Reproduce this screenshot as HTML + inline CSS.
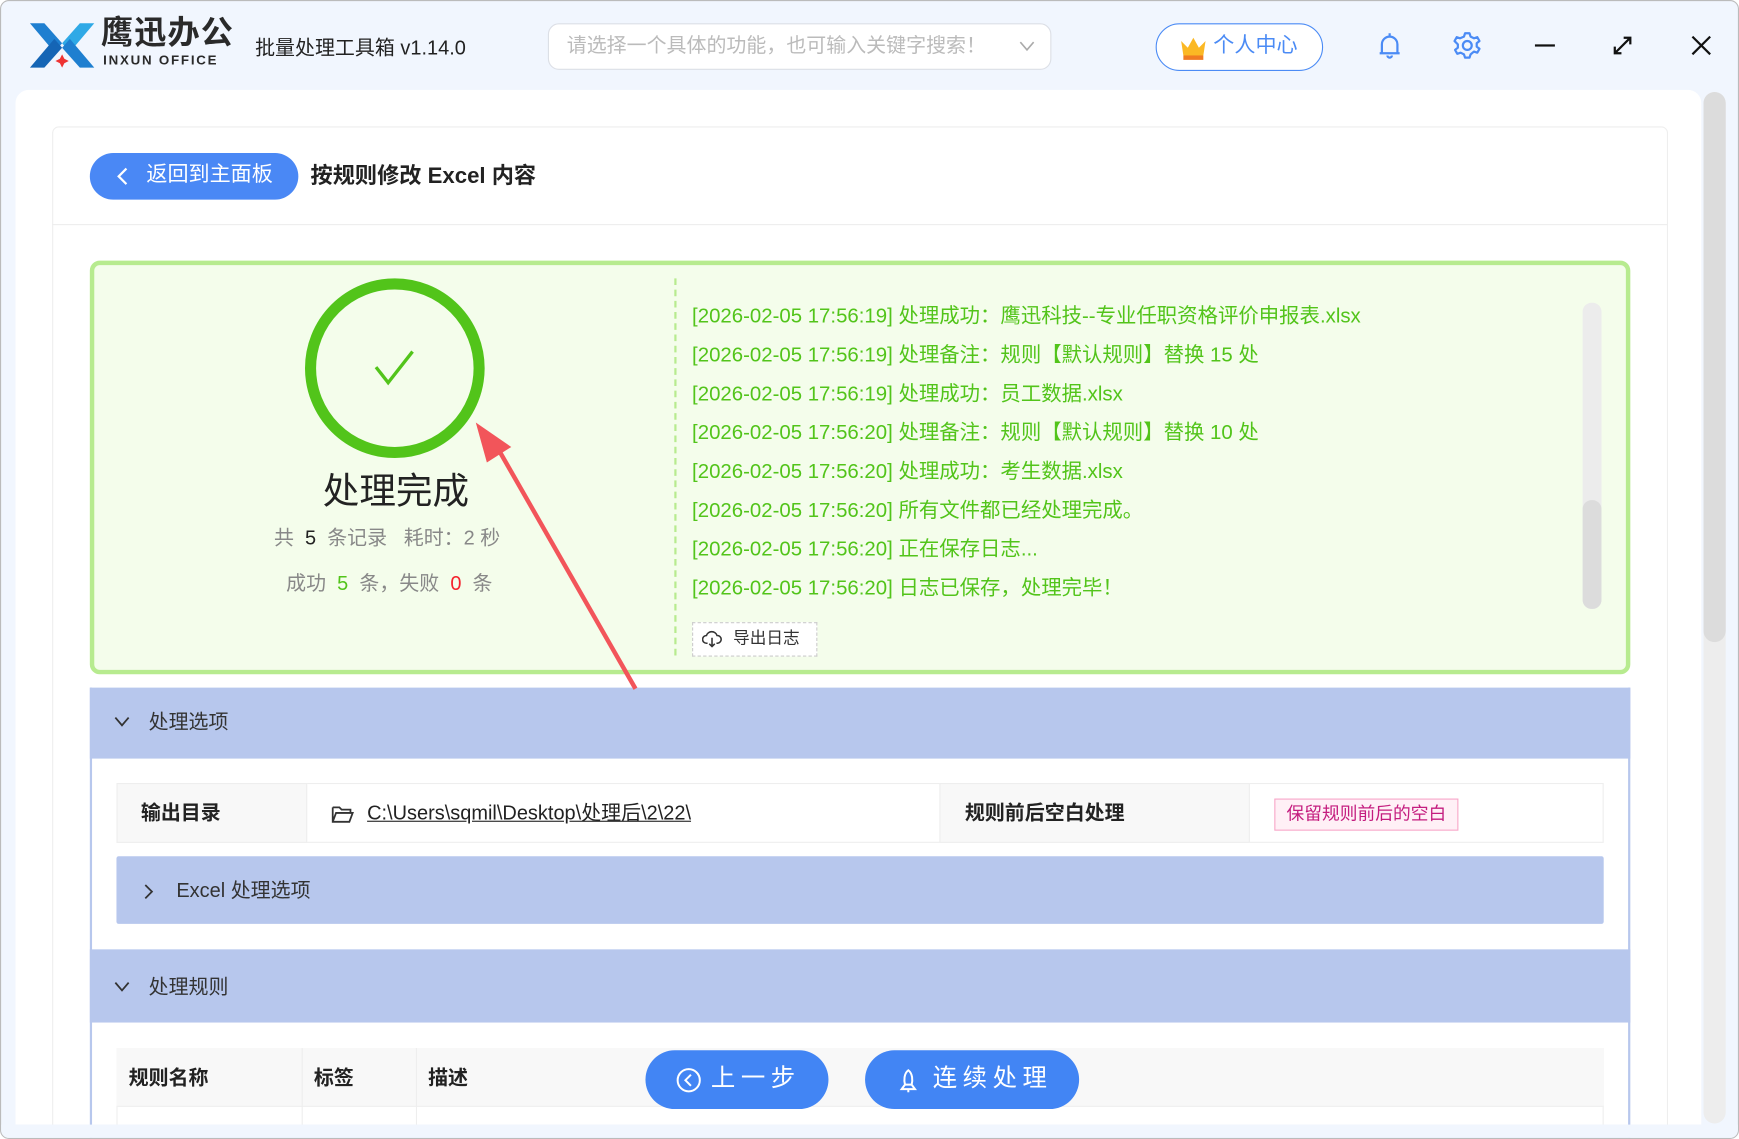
<!DOCTYPE html>
<html><head><meta charset="utf-8"><style>
*{box-sizing:border-box;margin:0;padding:0}
html,body{width:1739px;height:1139px;overflow:hidden;background:#fff}
#s{position:absolute;left:0;top:0;width:1568px;height:1027px;transform:scale(1.10906);transform-origin:0 0;background:#f1f6fe;font-family:"Liberation Sans","Noto Sans CJK SC",sans-serif;color:#333;border:1px solid #bbb;border-radius:8px;overflow:hidden}
.a{position:absolute}
.t{white-space:nowrap;line-height:1.2}
</style></head><body><div id="s">
<!-- logo -->
<svg class="a" style="left:24px;top:18px" width="62" height="44" viewBox="0 0 62 44">
<path d="M2 2h13l16 18-7 8z" fill="#1f7fd0"/><path d="M60 2H47L31 20l7 8z" fill="#2fa9e6"/>
<path d="M2 42h13l16-18-7-8z" fill="#1565b5"/><path d="M60 42H47L31 24l7-8z" fill="#1f7fd0"/>
<path d="M31 30l2 4 4 2-4 2-2 4-2-4-4-2 4-2z" fill="#e33"/></svg>
<div class="a t" style="left:90px;top:15px;font-size:29px;line-height:1;font-weight:bold;color:#2a2a2a;letter-spacing:1px">鹰迅办公</div>
<div class="a t" style="left:92px;top:47px;font-size:12px;line-height:1;font-weight:bold;color:#2a2a2a;letter-spacing:1.6px">INXUN OFFICE</div>
<div class="a t" style="left:229px;top:32px;font-size:18px;color:#222">批量处理工具箱 v1.14.0</div>
<div class="a" style="left:493px;top:20px;width:454px;height:42px;border:1px solid #dcdfe6;border-radius:10px;background:#fff"></div>
<div class="a t" style="left:510px;top:30px;font-size:18px;color:#bbb">请选择一个具体的功能，也可输入关键字搜索！</div>
<svg class="a" style="left:917px;top:35px" width="16" height="12"><path d="M2 2l6 7 6-7" stroke="#aaa" stroke-width="1.5" fill="none"/></svg>
<div class="a" style="left:1041px;top:20px;width:151px;height:43px;border:1px solid #4b8bf5;border-radius:22px;background:#fff"></div>
<svg class="a" style="left:1062px;top:30px" width="26" height="24"><path d="M2 6l6 6 5-9 5 9 6-6-2 13H4z" fill="#fbb824"/><rect x="4" y="19" width="18" height="4" fill="#f07b22"/></svg>
<div class="a t" style="left:1093px;top:30px;font-size:19px;color:#4b8bf5">个人中心</div>
<svg class="a" style="left:1240px;top:27px" width="24" height="28"><path d="M5 20V12a7 7 0 0114 0v8h2H3zM12 2v3M10 22a2 2 0 004 0" stroke="#4b8bf5" stroke-width="2" fill="none"/></svg>
<svg class="a" style="left:1309px;top:27px" width="26" height="26" viewBox="0 0 26 26"><circle cx="13" cy="13" r="4" stroke="#4b8bf5" stroke-width="2" fill="none"/><path d="M11 2h4l1 3 3 1.5 3-1 2 3.5-2.5 2v3l2.5 2-2 3.5-3-1L16 21l-1 3h-4l-1-3-3-1.5-3 1-2-3.5 2.5-2v-3L1.5 9l2-3.5 3 1L10 5z" stroke="#4b8bf5" stroke-width="2" fill="none" stroke-linejoin="round"/></svg>
<div class="a" style="left:1383px;top:39px;width:18px;height:2px;background:#111"></div>
<svg class="a" style="left:1452px;top:30px" width="20" height="20"><path d="M3 17l14-14M11 3h6v6M3 11v6h6" stroke="#111" stroke-width="2" fill="none"/></svg>
<svg class="a" style="left:1523px;top:30px" width="20" height="20"><path d="M2 2l16 16M18 2L2 18" stroke="#111" stroke-width="2"/></svg>
<!-- main panel -->
<div class="a" style="left:13px;top:80px;width:1520px;height:933px;background:#fff;border-radius:12px 12px 0 0"></div>
<div class="a" style="left:1535px;top:82px;width:20px;height:930px;background:#ededed;border-radius:10px"></div>
<div class="a" style="left:1535px;top:82px;width:20px;height:496px;background:#dcdcdc;border-radius:10px"></div>
<div class="a" style="left:46px;top:113px;width:1457px;height:920px;border:1px solid #eee;border-radius:6px"></div>
<div class="a" style="left:46px;top:201px;width:1457px;height:1px;background:#eee"></div>
<div class="a" style="left:80px;top:137px;width:188px;height:42px;background:#4a88f5;border-radius:21px"></div>
<svg class="a" style="left:102px;top:149px" width="14" height="18"><path d="M11 2L4 9l7 7" stroke="#fff" stroke-width="2" fill="none"/></svg>
<div class="a t" style="left:131px;top:146px;font-size:19px;color:#fff">返回到主面板</div>
<div class="a t" style="left:279px;top:146px;font-size:20px;font-weight:bold;color:#222">按规则修改 Excel 内容</div>
<!-- green box -->
<div class="a" style="left:80px;top:234px;width:1389px;height:373px;border:4px solid #b7eb8f;background:#f4fdeb;border-radius:9px"></div>
<div class="a" style="left:274px;top:250px;width:162px;height:162px;border:10px solid #52c41a;border-radius:50%"></div>
<svg class="a" style="left:335px;top:313px" width="40" height="34"><path d="M3 17l11 14L36 3" stroke="#52c41a" stroke-width="3" fill="none"/></svg>
<div class="a t" style="left:290px;top:422px;font-size:33px;color:#222">处理完成</div>
<div class="a t" style="left:246px;top:474px;font-size:18px;color:#888">共 <span style="color:#222">&nbsp;5&nbsp;</span> 条记录 &nbsp;&nbsp;耗时：2 秒</div>
<div class="a t" style="left:257px;top:515px;font-size:18px;color:#888">成功 <span style="color:#52c41a">&nbsp;5&nbsp;</span> 条，失败 <span style="color:#f5222d">&nbsp;0&nbsp;</span> 条</div>
<div class="a" style="left:607px;top:250px;width:0;height:340px;border-left:2px dashed #b7eb8f"></div>
<div class="a" style="left:623px;top:266px;font-size:18.4px;color:#52c41a;line-height:35px;white-space:nowrap">
[2026-02-05 17:56:19] 处理成功：鹰迅科技--专业任职资格评价申报表.xlsx<br>
[2026-02-05 17:56:19] 处理备注：规则【默认规则】替换 15 处<br>
[2026-02-05 17:56:19] 处理成功：员工数据.xlsx<br>
[2026-02-05 17:56:20] 处理备注：规则【默认规则】替换 10 处<br>
[2026-02-05 17:56:20] 处理成功：考生数据.xlsx<br>
[2026-02-05 17:56:20] 所有文件都已经处理完成。<br>
[2026-02-05 17:56:20] 正在保存日志...<br>
[2026-02-05 17:56:20] 日志已保存，处理完毕！</div>
<div class="a" style="left:1426px;top:272px;width:17px;height:276px;background:#ececec;border-radius:8px"></div>
<div class="a" style="left:1426px;top:450px;width:17px;height:98px;background:#dcdcdc;border-radius:8px"></div>
<div class="a" style="left:623px;top:560px;width:113px;height:31px;border:1px dashed #ccc;background:#fff"></div>
<svg class="a" style="left:632px;top:567px" width="18" height="16"><path d="M5 12H4a3.5 3.5 0 010-7 5 5 0 019.5 0A3.5 3.5 0 0114 12h-1M9 7v8M6.5 12.5L9 15l2.5-2.5" stroke="#333" stroke-width="1.4" fill="none"/></svg>
<div class="a t" style="left:660px;top:566px;font-size:15px;color:#333">导出日志</div>
<!-- section 1 -->
<div class="a" style="left:80px;top:619px;width:1389px;height:406px;border:2px solid #b7c7ed;border-top:0"></div>
<div class="a" style="left:80px;top:619px;width:1389px;height:64px;background:#b7c7ed"></div>
<svg class="a" style="left:101px;top:644px" width="16" height="12"><path d="M2 2l6 7 6-7" stroke="#333" stroke-width="1.6" fill="none"/></svg>
<div class="a t" style="left:133px;top:640px;font-size:18px;color:#333">处理选项</div>
<div class="a" style="left:104px;top:705px;width:1341px;height:54px;border:1px solid #eee"></div>
<div class="a" style="left:104px;top:705px;width:172px;height:54px;background:#f8f8f8;border:1px solid #eee"></div>
<div class="a" style="left:846px;top:705px;width:280px;height:54px;background:#f8f8f8;border:1px solid #eee"></div>
<div class="a t" style="left:126px;top:722px;font-size:18px;font-weight:bold;color:#222">输出目录</div>
<svg class="a" style="left:297px;top:724px" width="22" height="18"><path d="M2 3h6l2 2h8v3M2 3v13h15l3-8H5L2 16" stroke="#333" stroke-width="1.6" fill="none"/></svg>
<div class="a t" style="left:330px;top:722px;font-size:18px;color:#222;text-decoration:underline">C:\Users\sqmil\Desktop\处理后\2\22\</div>
<div class="a t" style="left:869px;top:722px;font-size:18px;font-weight:bold;color:#222">规则前后空白处理</div>
<div class="a t" style="left:1148px;top:719px;height:29px;padding:0 10px;border:1px solid #f8a7c9;background:#fff0f6;font-size:16px;line-height:27px;color:#c41d7f">保留规则前后的空白</div>
<div class="a" style="left:104px;top:771px;width:1341px;height:61px;background:#b7c7ed;border-radius:2px"></div>
<svg class="a" style="left:127px;top:795px" width="12" height="16"><path d="M3 2l6 6-6 6" stroke="#333" stroke-width="1.6" fill="none"/></svg>
<div class="a t" style="left:158px;top:792px;font-size:18px;color:#333">Excel 处理选项</div>
<!-- section 2 -->
<div class="a" style="left:80px;top:855px;width:1389px;height:66px;background:#b7c7ed"></div>
<svg class="a" style="left:101px;top:883px" width="16" height="12"><path d="M2 2l6 7 6-7" stroke="#333" stroke-width="1.6" fill="none"/></svg>
<div class="a t" style="left:133px;top:879px;font-size:18px;color:#333">处理规则</div>
<div class="a" style="left:104px;top:944px;width:1341px;height:80px;border:1px solid #eee"></div>
<div class="a" style="left:104px;top:944px;width:1341px;height:53px;background:#f8f8f8;border-bottom:1px solid #eee"></div>
<div class="a" style="left:271px;top:944px;width:1px;height:80px;background:#eee"></div>
<div class="a" style="left:374px;top:944px;width:1px;height:80px;background:#eee"></div>
<div class="a t" style="left:115px;top:961px;font-size:18px;font-weight:bold;color:#222">规则名称</div>
<div class="a t" style="left:282px;top:961px;font-size:18px;font-weight:bold;color:#222">标签</div>
<div class="a t" style="left:385px;top:961px;font-size:18px;font-weight:bold;color:#222">描述</div>
<div class="a" style="left:581px;top:946px;width:165px;height:53px;background:#4285f4;border-radius:27px"></div>
<svg class="a" style="left:608px;top:961px" width="24" height="24"><circle cx="12" cy="12" r="10" stroke="#fff" stroke-width="1.8" fill="none"/><path d="M14 7l-5 5 5 5" stroke="#fff" stroke-width="1.8" fill="none"/></svg>
<div class="a t" style="left:640px;top:958px;font-size:22px;color:#fff;letter-spacing:5px">上一步</div>
<div class="a" style="left:779px;top:946px;width:193px;height:53px;background:#4285f4;border-radius:27px"></div>
<svg class="a" style="left:808px;top:962px" width="20" height="22"><path d="M10 2c4 3 4 9 3 13H7C6 11 6 5 10 2zM7 15l-3 4h12l-3-4M10 19v3" stroke="#fff" stroke-width="1.8" fill="none"/></svg>
<div class="a t" style="left:840px;top:958px;font-size:22px;color:#fff;letter-spacing:5px">连续处理</div>
<div class="a" style="left:0;top:1013px;width:1568px;height:14px;background:#f1f6fe"></div>
<!-- arrow -->
<svg class="a" style="left:0;top:0" width="1568" height="1027"><path d="M572 620L446 400" stroke="#f2555a" stroke-width="4"/><path d="M428 380l32 22-22 14z" fill="#f2555a"/></svg>
</div></body></html>
